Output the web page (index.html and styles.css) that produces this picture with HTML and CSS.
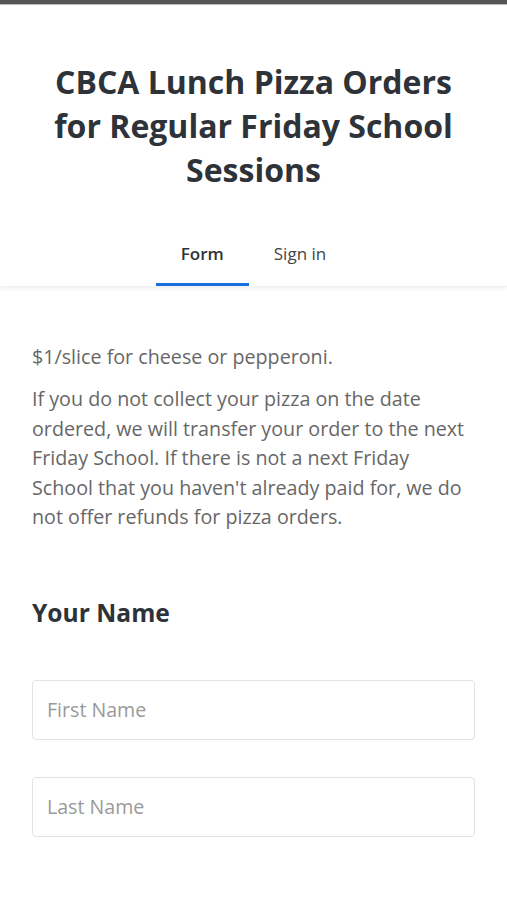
FILE: index.html
```html
<!DOCTYPE html>
<html lang="en">
<head>
    <meta charset="UTF-8">
    <meta name="viewport" content="width=device-width, initial-scale=1.0">
    <title>CBCA Lunch Pizza Orders</title>
    <link rel="stylesheet" href="styles.css">
</head>
<body>
    <div class="topbar"></div>
    <header class="header">
        <h1 class="title">CBCA Lunch Pizza Orders for Regular Friday School Sessions</h1>
        <nav class="tabs">
            <a href="#" class="tab active">Form</a>
            <a href="#" class="tab">Sign in</a>
        </nav>
    </header>
    <main class="content">
        <p class="desc">$1/slice for cheese or pepperoni.</p>
        <p class="desc">If you do not collect your pizza on the date ordered, we will transfer your order to the next Friday School. If there is not a next Friday School that you haven't already paid for, we do not offer refunds for pizza orders.</p>

        <h2 class="section">Your Name</h2>
        <form class="fields">
            <input type="text" class="field" placeholder="First Name">
            <input type="text" class="field" placeholder="Last Name">
        </form>
    </main>
</body>
</html>
```

FILE: styles.css
```css
body {
    margin: 0;
    font-family: "Open Sans", Arial, sans-serif;
    background-color: #fff;
    color: #2d3338;
}
.topbar {
    height: 4px;
    background-color: #555;
    border-bottom: 1px solid #bbb;
}
.header {
    background-color: #fff;
    box-shadow: 0 2px 4px rgba(0, 0, 0, 0.06);
    border-bottom: 1px solid #f0f0f0;
    text-align: center;
}
.title {
    margin: 0;
    padding: 55px 48px 0;
    font-size: 32px;
    line-height: 44px;
    font-weight: 700;
    color: #2d3338;
}
.tabs {
    display: flex;
    justify-content: center;
    margin-top: 30px;
}
.tab {
    padding: 0 25px;
    height: 64px;
    line-height: 63px;
    font-size: 17px;
    color: #444;
    text-decoration: none;
    box-sizing: border-box;
    border-bottom: 3px solid transparent;
}
.tab.active {
    color: #2d3338;
    font-weight: 600;
    border-bottom-color: #1a6fe0;
}
.content {
    padding: 55px 32px 40px;
}
.desc {
    margin: 0 0 12.5px;
    font-size: 19.7px;
    line-height: 29.5px;
    color: #676767;
}
.section {
    margin: 64px 0 0;
    font-size: 24.6px;
    line-height: 34px;
    font-weight: 700;
    color: #2d3338;
}
.fields {
    display: flex;
    flex-direction: column;
    gap: 37px;
    margin-top: 50px;
}
.field {
    height: 60px;
    padding: 0 14px;
    border: 1px solid #e2e2e2;
    border-radius: 4px;
    font-family: "Open Sans", Arial, sans-serif;
    font-size: 19.6px;
    color: #333;
    box-sizing: border-box;
    width: 100%;
}
.field::placeholder {
    color: #9a9a9a;
}
```
